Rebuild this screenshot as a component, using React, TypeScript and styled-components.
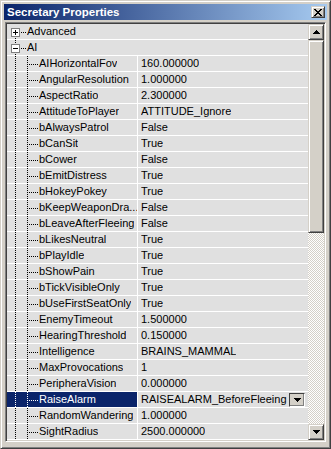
import React from "react";
import styled, { createGlobalStyle } from "styled-components";

const GlobalStyle = createGlobalStyle`
  html, body { margin: 0; padding: 0; background: #d4d0c8; }
  body { width: 331px; height: 449px; overflow: hidden; }
`;

const raised = `
  border: 1px solid;
  border-color: #d4d0c8 #404040 #404040 #d4d0c8;
  box-shadow: inset 1px 1px 0 #ffffff, inset -1px -1px 0 #808080;
`;

const Window = styled.div`
  box-sizing: border-box;
  width: 331px;
  height: 449px;
  background: #d4d0c8;
  ${raised}
  padding: 3px;
  display: flex;
  flex-direction: column;
  font-family: "Liberation Sans", Arial, sans-serif;
`;

const TitleBar = styled.div`
  height: 16px;
  flex-shrink: 0;
  display: flex;
  align-items: center;
  justify-content: space-between;
  padding: 0 2px 0 3px;
  background: linear-gradient(to right, #0a246a, #a6caf0);
`;

const TitleText = styled.span`
  color: #ffffff;
  font-weight: bold;
  font-size: 11.5px;
  line-height: 16px;
  white-space: nowrap;
`;

const CloseButton = styled.div`
  box-sizing: border-box;
  width: 14px;
  height: 12px;
  background: #d4d0c8;
  ${raised}
  display: flex;
  align-items: center;
  justify-content: center;
`;

const List = styled.div`
  flex: 1;
  margin: 2px 1px 3px 1px;
  border: 1px solid;
  border-color: #808080 #ffffff #ffffff #808080;
  box-shadow: inset 1px 1px 0 #404040, inset -1px -1px 0 #d4d0c8;
  padding: 1px;
  display: flex;
  min-height: 0;
`;

const Rows = styled.div`
  flex: 1;
  background: #e0e0e0;
  overflow: hidden;
  display: flex;
  flex-direction: column;
`;

const Row = styled.div`
  box-sizing: border-box;
  height: 16px;
  flex-shrink: 0;
  display: flex;
  border-bottom: 1px solid #ffffff;
`;

const NameCell = styled.div<{ $full?: boolean; $selected?: boolean }>`
  box-sizing: border-box;
  display: flex;
  height: 15px;
  width: ${(p) => (p.$full ? "100%" : "131px")};
  flex-shrink: 0;
  border-right: ${(p) => (p.$full ? "none" : "1px solid #ffffff")};
  background: ${(p) => (p.$selected ? "#0a246a" : "transparent")};
  color: ${(p) => (p.$selected ? "#ffffff" : "#000000")};
  overflow: hidden;
`;

const Label = styled.span`
  font-size: 11px;
  line-height: 15px;
  white-space: nowrap;
  overflow: hidden;
`;

const ValueCell = styled.div`
  flex: 1;
  height: 15px;
  display: flex;
  align-items: center;
  justify-content: space-between;
  padding: 0 3px 0 3px;
  color: #000000;
  min-width: 0;
`;

const GuideSvg = styled.svg`
  display: block;
  flex-shrink: 0;
  shape-rendering: crispEdges;
`;

const ComboButton = styled.div`
  box-sizing: border-box;
  width: 16px;
  height: 14px;
  flex-shrink: 0;
  border: 1px solid;
  border-color: #404040 #ffffff #ffffff #404040;
  background: #d4d0c8;
  box-shadow: inset -1px -1px 0 #808080;
  display: flex;
  align-items: center;
  justify-content: center;
`;

const ScrollBar = styled.div`
  width: 16px;
  flex-shrink: 0;
  display: flex;
  flex-direction: column;
`;

const ScrollButton = styled.div`
  box-sizing: border-box;
  width: 16px;
  height: 16px;
  flex-shrink: 0;
  background: #d4d0c8;
  ${raised}
  display: flex;
  align-items: center;
  justify-content: center;
`;

const Thumb = styled.div<{ $h: number }>`
  box-sizing: border-box;
  width: 16px;
  height: ${(p) => p.$h}px;
  flex-shrink: 0;
  background: #d4d0c8;
  ${raised}
`;

const Track = styled.div`
  flex: 1;
  background: repeating-conic-gradient(#d4d0c8 0% 25%, #ffffff 0% 50%) 0 0 / 2px 2px;
`;

type Kind = "collapsed" | "expanded" | "child";

const dotsV = (x: number, y0: number, y1: number) => {
  const r: React.ReactElement[] = [];
  for (let y = y0; y <= y1; y++)
    if (y % 2 === 0) r.push(<rect key={`v${x}-${y}`} x={x} y={y} width={1} height={1} />);
  return r;
};

const dotsH = (y: number, x0: number, x1: number) => {
  const r: React.ReactElement[] = [];
  for (let x = x0; x <= x1; x++)
    if (x % 2 === 0) r.push(<rect key={`h${y}-${x}`} x={x} y={y} width={1} height={1} />);
  return r;
};

function TreeGuide({ kind, selected }: { kind: Kind; selected?: boolean }) {
  const w = kind === "child" ? 32 : 20;
  const color = selected ? "#ffffff" : "#000000";
  const cy = 8;
  let dots: React.ReactElement[];
  if (kind === "child") dots = [...dotsV(8, 0, 14), ...dotsV(20, 0, 14), ...dotsH(cy, 22, 31)];
  else if (kind === "expanded") dots = [...dotsV(8, 0, 3), ...dotsV(8, 13, 14), ...dotsH(cy, 14, 19)];
  else dots = [...dotsV(8, 13, 14), ...dotsH(cy, 14, 19)];
  return (
    <GuideSvg width={w} height={15} viewBox={`0 0 ${w} 15`}>
      <g fill={color}>{dots}</g>
      {kind !== "child" && (
        <g>
          <rect x={4.5} y={4.5} width={8} height={8} fill="#ffffff" stroke="#808080" strokeWidth={1} />
          <rect x={6} y={8} width={5} height={1} fill="#000000" />
          {kind === "collapsed" && <rect x={8} y={6} width={1} height={5} fill="#000000" />}
        </g>
      )}
    </GuideSvg>
  );
}

function Arrow({ dir }: { dir: "up" | "down" }) {
  const widths = dir === "up" ? [1, 3, 5, 7] : [7, 5, 3, 1];
  return (
    <GuideSvg width={7} height={4} viewBox="0 0 7 4">
      {widths.map((w, i) => (
        <rect key={i} x={(7 - w) / 2} y={i} width={w} height={1} fill="#000000" />
      ))}
    </GuideSvg>
  );
}

function CloseGlyph() {
  const px: [number, number][] = [];
  const pattern = ["XX....XX", ".XX..XX.", "..XXXX..", "...XX...", "..XXXX..", ".XX..XX.", "XX....XX"];
  pattern.forEach((line, y) =>
    line.split("").forEach((c, x) => {
      if (c === "X") px.push([x, y]);
    })
  );
  return (
    <GuideSvg width={8} height={7} viewBox="0 0 8 7">
      {px.map(([x, y]) => (
        <rect key={`${x}-${y}`} x={x} y={y} width={1} height={1} fill="#000000" />
      ))}
    </GuideSvg>
  );
}

const props: [string, string][] = [
  ["AIHorizontalFov", "160.000000"],
  ["AngularResolution", "1.000000"],
  ["AspectRatio", "2.300000"],
  ["AttitudeToPlayer", "ATTITUDE_Ignore"],
  ["bAlwaysPatrol", "False"],
  ["bCanSit", "True"],
  ["bCower", "False"],
  ["bEmitDistress", "True"],
  ["bHokeyPokey", "True"],
  ["bKeepWeaponDra...", "False"],
  ["bLeaveAfterFleeing", "False"],
  ["bLikesNeutral", "True"],
  ["bPlayIdle", "True"],
  ["bShowPain", "True"],
  ["bTickVisibleOnly", "True"],
  ["bUseFirstSeatOnly", "True"],
  ["EnemyTimeout", "1.500000"],
  ["HearingThreshold", "0.150000"],
  ["Intelligence", "BRAINS_MAMMAL"],
  ["MaxProvocations", "1"],
  ["PeripheraVision", "0.000000"],
  ["RaiseAlarm", "RAISEALARM_BeforeFleeing"],
  ["RandomWandering", "1.000000"],
  ["SightRadius", "2500.000000"],
];

export default function App() {
  return (
    <>
      <GlobalStyle />
      <Window>
        <TitleBar>
          <TitleText>Secretary Properties</TitleText>
          <CloseButton>
            <CloseGlyph />
          </CloseButton>
        </TitleBar>
        <List>
          <Rows>
            <Row>
              <NameCell $full>
                <TreeGuide kind="collapsed" />
                <Label>Advanced</Label>
              </NameCell>
            </Row>
            <Row>
              <NameCell $full>
                <TreeGuide kind="expanded" />
                <Label>AI</Label>
              </NameCell>
            </Row>
            {props.map(([name, value]) => {
              const selected = name === "RaiseAlarm";
              return (
                <Row key={name}>
                  <NameCell $selected={selected}>
                    <TreeGuide kind="child" selected={selected} />
                    <Label>{name}</Label>
                  </NameCell>
                  <ValueCell>
                    <Label>{value}</Label>
                    {selected && (
                      <ComboButton>
                        <Arrow dir="down" />
                      </ComboButton>
                    )}
                  </ValueCell>
                </Row>
              );
            })}
          </Rows>
          <ScrollBar>
            <ScrollButton>
              <Arrow dir="up" />
            </ScrollButton>
            <Thumb $h={193} />
            <Track />
            <ScrollButton>
              <Arrow dir="down" />
            </ScrollButton>
          </ScrollBar>
        </List>
      </Window>
    </>
  );
}
